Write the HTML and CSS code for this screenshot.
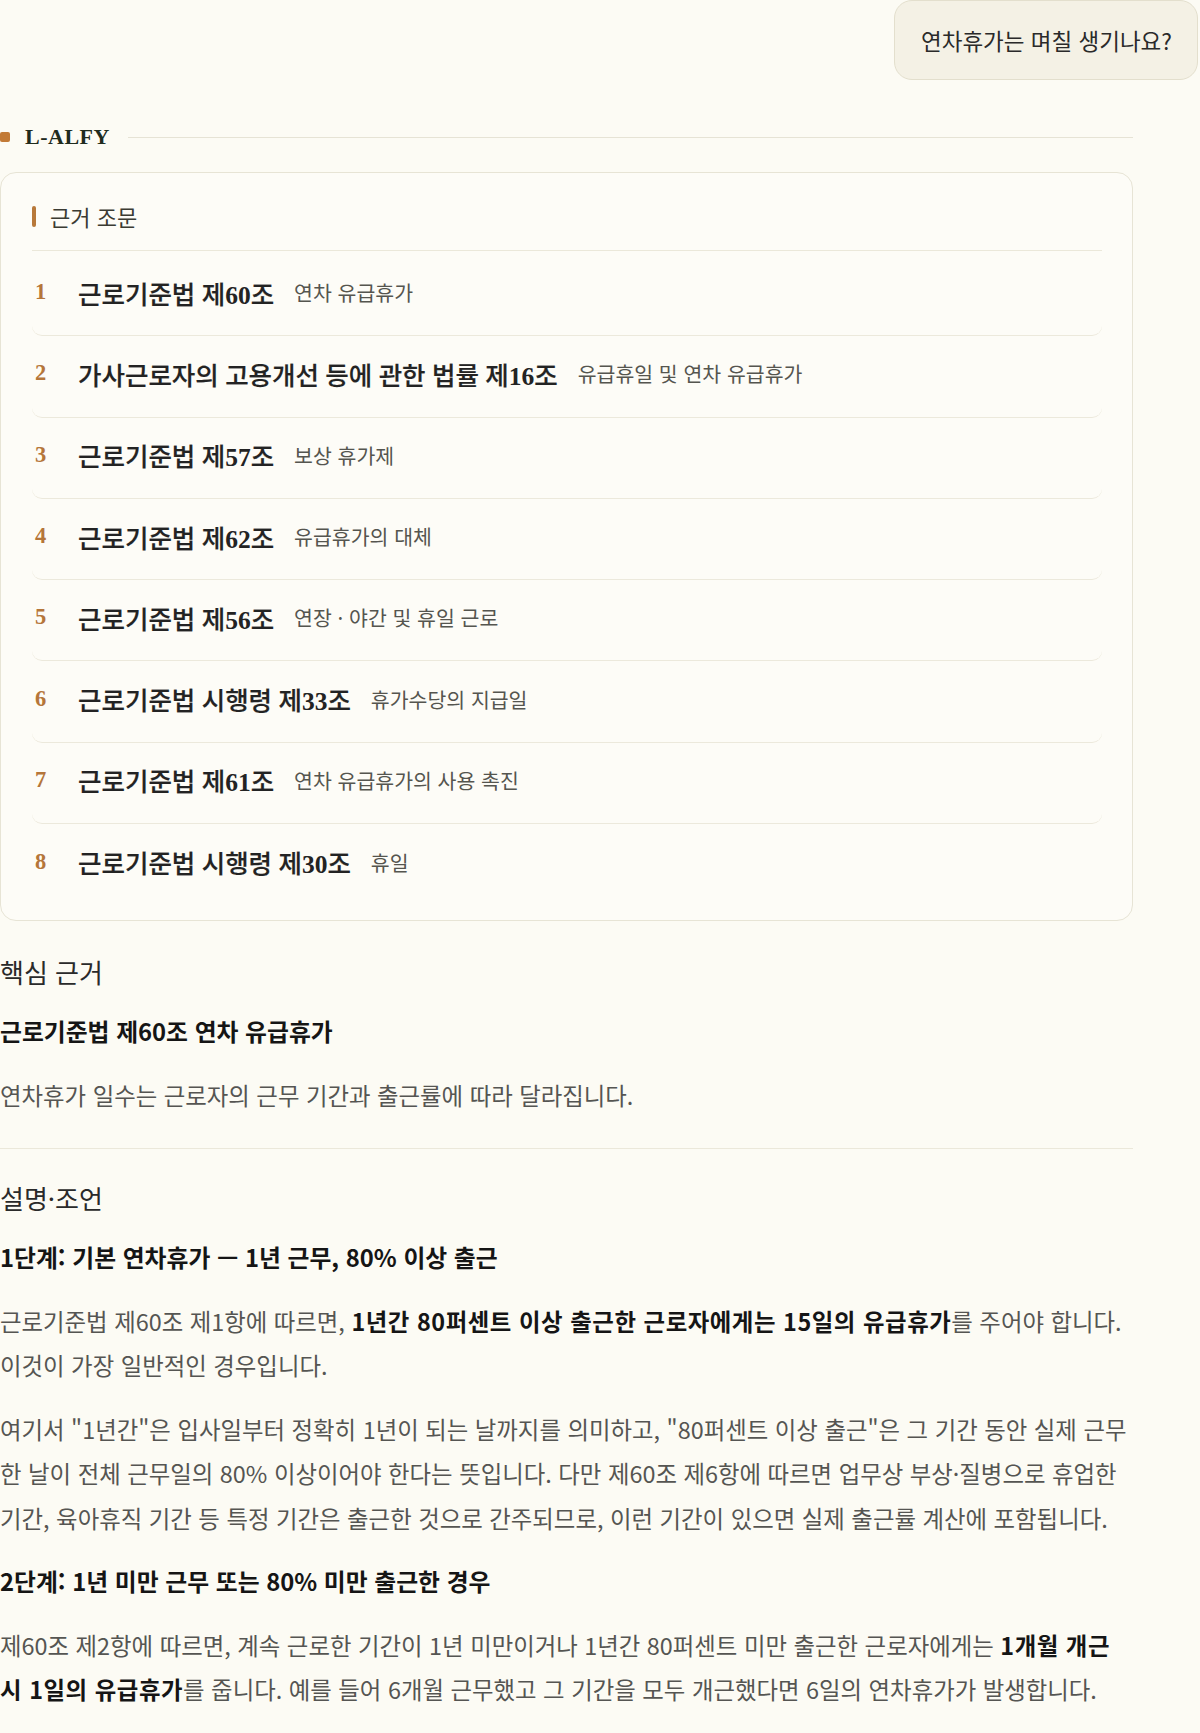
FILE: index.html
```html
<!DOCTYPE html>
<html lang="ko">
<head>
<meta charset="utf-8">
<title>L-ALFY</title>
<link rel="stylesheet" href="styles.css">
</head>
<body>
<main class="chat">
  <div class="user-row">
    <div class="bubble">연차휴가는 며칠 생기나요?</div>
  </div>
  <section class="answer">
    <div class="brand">
      <span class="brand-mark"></span>
      <span class="brand-name">L-ALFY</span>
      <span class="brand-line"></span>
    </div>
    <div class="refs">
      <div class="refs-head">
        <span class="refs-bar"></span>
        <span class="refs-title">근거 조문</span>
      </div>
      <ol class="ref-list">
        <li class="ref"><span class="ref-num">1</span><span class="ref-law">근로기준법 제<b>60</b>조</span><span class="ref-desc">연차 유급휴가</span></li>
        <li class="ref"><span class="ref-num">2</span><span class="ref-law">가사근로자의 고용개선 등에 관한 법률 제<b>16</b>조</span><span class="ref-desc">유급휴일 및 연차 유급휴가</span></li>
        <li class="ref"><span class="ref-num">3</span><span class="ref-law">근로기준법 제<b>57</b>조</span><span class="ref-desc">보상 휴가제</span></li>
        <li class="ref"><span class="ref-num">4</span><span class="ref-law">근로기준법 제<b>62</b>조</span><span class="ref-desc">유급휴가의 대체</span></li>
        <li class="ref"><span class="ref-num">5</span><span class="ref-law">근로기준법 제<b>56</b>조</span><span class="ref-desc">연장 · 야간 및 휴일 근로</span></li>
        <li class="ref"><span class="ref-num">6</span><span class="ref-law">근로기준법 시행령 제<b>33</b>조</span><span class="ref-desc">휴가수당의 지급일</span></li>
        <li class="ref"><span class="ref-num">7</span><span class="ref-law">근로기준법 제<b>61</b>조</span><span class="ref-desc">연차 유급휴가의 사용 촉진</span></li>
        <li class="ref"><span class="ref-num">8</span><span class="ref-law">근로기준법 시행령 제<b>30</b>조</span><span class="ref-desc">휴일</span></li>
      </ol>
    </div>

    <h2>핵심 근거</h2>
    <h3>근로기준법 제60조 연차 유급휴가</h3>
    <p>연차휴가 일수는 근로자의 근무 기간과 출근률에 따라 달라집니다.</p>

    <hr>

    <h2>설명·조언</h2>
    <h3>1단계: 기본 연차휴가 — 1년 근무, 80% 이상 출근</h3>
    <p>근로기준법 제60조 제1항에 따르면, <strong>1년간 80퍼센트 이상 출근한 근로자에게는 15일의 유급휴가</strong>를 주어야 합니다. 이것이 가장 일반적인 경우입니다.</p>
    <p>여기서 "1년간"은 입사일부터 정확히 1년이 되는 날까지를 의미하고, "80퍼센트 이상 출근"은 그 기간 동안 실제 근무한 날이 전체 근무일의 80% 이상이어야 한다는 뜻입니다. 다만 제60조 제6항에 따르면 업무상 부상·질병으로 휴업한 기간, 육아휴직 기간 등 특정 기간은 출근한 것으로 간주되므로, 이런 기간이 있으면 실제 출근률 계산에 포함됩니다.</p>
    <h3>2단계: 1년 미만 근무 또는 80% 미만 출근한 경우</h3>
    <p>제60조 제2항에 따르면, 계속 근로한 기간이 1년 미만이거나 1년간 80퍼센트 미만 출근한 근로자에게는 <strong>1개월 개근 시 1일의 유급휴가</strong>를 줍니다. 예를 들어 6개월 근무했고 그 기간을 모두 개근했다면 6일의 연차휴가가 발생합니다.</p>
  </section>
</main>
</body>
</html>
```

FILE: styles.css
```css
html, body {
  margin: 0;
  padding: 0;
  background: #fcfbf4;
}

body {
  font-family: "Noto Sans CJK KR", "Noto Sans", sans-serif;
  color: #2b2b2b;
}

.chat {
  width: 1200px;
}

.user-row {
  display: flex;
  justify-content: flex-end;
  padding-right: 2px;
}

.bubble {
  background: #f4f1e5;
  border: 1px solid #e3dfcd;
  border-radius: 18px;
  padding: 18px 25px 18px 26px;
  font-size: 22.5px;
  line-height: 42px;
  color: #2a2a2a;
}

.answer {
  width: 1133px;
}

.brand {
  display: flex;
  align-items: center;
  height: 30px;
  margin-top: 42px;
  margin-bottom: 20px;
}

.brand-mark {
  width: 10px;
  height: 10px;
  border-radius: 2px;
  background: #c27a36;
}

.brand-name {
  margin-left: 15px;
  font-family: "Liberation Serif", serif;
  font-weight: 700;
  font-size: 22px;
  letter-spacing: 0.5px;
  color: #1f2b1d;
}

.brand-line {
  flex: 1;
  height: 1px;
  margin-left: 18px;
  background: #e6e3d5;
}

.refs {
  border: 1px solid #e7e4d5;
  border-radius: 16px;
  background: #fdfcf7;
  padding: 23px 30px 15px 31px;
  margin-bottom: 29px;
}

.refs-head {
  display: flex;
  align-items: center;
  gap: 14px;
  height: 40px;
  padding-bottom: 14px;
  border-bottom: 1px solid #ebe8da;
}

.refs-bar {
  width: 4px;
  height: 21px;
  border-radius: 2px;
  background: #b8793a;
}

.refs-title {
  font-size: 22px;
  color: #3b3b33;
}

.ref-list {
  list-style: none;
  margin: 0;
  padding: 4px 0 0;
}

.ref {
  display: flex;
  align-items: center;
  box-sizing: border-box;
  height: 81.3px;
  padding: 0 0 6px 3px;
  border-bottom: 1px solid #ece9dc;
  border-radius: 10px;
}

.ref:last-child {
  border-bottom: none;
}

.ref-num {
  width: 24px;
  margin-right: 19px;
  font-family: "Liberation Serif", serif;
  font-weight: 700;
  font-size: 22.5px;
  color: #b5763a;
}

.ref-law {
  margin-right: 20px;
  font-family: "Liberation Serif", "Noto Sans CJK KR", serif;
  font-weight: 500;
  font-size: 25.5px;
  color: #232323;
  -webkit-text-stroke: 0.2px #232323;
}

.ref-law b {
  font-weight: 700;
  -webkit-text-stroke: 0;
}

.ref-desc {
  font-size: 20.5px;
  color: #55554f;
}

h2 {
  margin: 0 0 15px;
  font-size: 26px;
  font-weight: 400;
  line-height: 44px;
  color: #2a2a2a;
}

h3 {
  margin: 0 0 19px;
  font-size: 23.8px;
  font-weight: 700;
  line-height: 44.5px;
  color: #151515;
}

p {
  margin: 0 0 19px;
  font-size: 23.4px;
  line-height: 44.5px;
  color: #555552;
}

p strong {
  font-weight: 700;
  letter-spacing: 0.55px;
  color: #151515;
}

hr {
  border: 0;
  height: 1px;
  margin: 31px 0 27px;
  background: #ebe8da;
}
```
